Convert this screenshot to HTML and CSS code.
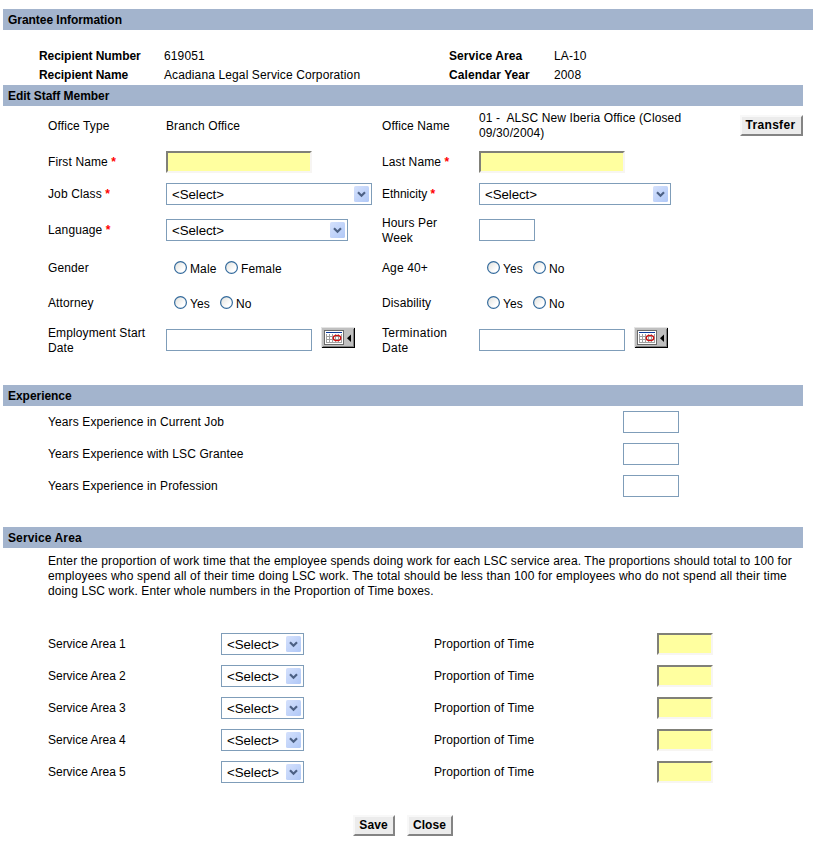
FILE: index.html
```html
<!DOCTYPE html>
<html lang="en">
<head>
<meta charset="utf-8">
<title>Edit Staff Member</title>
<link rel="stylesheet" href="styles.css">
</head>
<body>
<svg class="defs" aria-hidden="true">
  <defs>
    <linearGradient id="drop" x1="0" y1="0" x2="1" y2="1"><stop offset="0" stop-color="#d5e1fc"/><stop offset="1" stop-color="#b0c8f7"/></linearGradient>
    <linearGradient id="dot" x1="0" y1="0" x2="1" y2="1"><stop offset="0" stop-color="#dfdfda"/><stop offset=".7" stop-color="#ffffff"/></linearGradient>
    <symbol id="arrow" viewBox="0 0 15 16">
      <rect width="15" height="16" rx="1.5" fill="url(#drop)"/>
      <path d="M4 6.2l3.5 3.5L11 6.2" fill="none" stroke="#4d6185" stroke-width="2.2"/>
    </symbol>
    <symbol id="radio" viewBox="0 0 13 13">
      <circle cx="6.5" cy="6.5" r="5.9" fill="url(#dot)" stroke="#336a9c" stroke-width="1.2"/>
    </symbol>
    <symbol id="calendar" viewBox="0 0 34 21">
      <g shape-rendering="crispEdges">
        <rect width="34" height="21" fill="#c0c0c0"/>
        <path d="M0 0H34V1H1V21H0Z" fill="#e4e4e4"/>
        <path d="M33 1H34V21H1V20H33Z" fill="#000"/>
        <path d="M32 2H33V20H2V19H32Z" fill="#808080"/>
        <rect x="3.500" y="3.500" width="19" height="14" fill="#fff" stroke="#6a6a6a"/>
        <rect x="5" y="5" width="16" height="1" fill="#0a3a9a"/>
        <path d="M5 9.500H21M5 12.500H21M5 15.500H21M5.500 7V16M8.500 7V16M11.500 7V16M14.500 7V16M17.500 7V16M20.500 7V16" stroke="#a0a0a0"/>
      </g>
      <ellipse cx="16" cy="11" rx="3.700" ry="2.600" fill="none" stroke="#d01010" stroke-width="1.400"/>
      <path d="M30 7.500V15L26 11.250Z" fill="#000"/>
    </symbol>
  </defs>
</svg>
<main class="page">
  <h2 class="bar bar-wide">Grantee Information</h2>
  <dl class="grantee">
    <dt>Recipient Number</dt><dd>619051</dd><dt class="loose">Service Area</dt><dd>LA-10</dd>
    <dt>Recipient Name</dt><dd>Acadiana Legal Service Corporation</dd><dt class="loose">Calendar Year</dt><dd>2008</dd>
  </dl>

  <h2 class="bar">Edit Staff Member</h2>
  <section class="staff">
    <span class="low">Office Type</span><span class="low">Branch Office</span><span class="low">Office Name</span><span class="office low">01 -&nbsp; ALSC New Iberia Office (Closed 09/30/2004)</span><button class="btn transfer">Transfer</button>

    <label class="low">First Name <b class="req">*</b></label><input class="field name required"><label class="low">Last Name <b class="req">*</b></label><input class="field name required"><span></span>

    <label>Job Class <b class="req">*</b></label><div class="select job"><select><option>&lt;Select&gt;</option></select><svg class="arrow"><use href="#arrow"/></svg></div><label class="tight">Ethnicity <b class="req">*</b></label><div class="select ethnicity"><select><option>&lt;Select&gt;</option></select><svg class="arrow"><use href="#arrow"/></svg></div><span></span>

    <label>Language <b class="req">*</b></label><div class="select language"><select><option>&lt;Select&gt;</option></select><svg class="arrow"><use href="#arrow"/></svg></div><label class="low">Hours Per<br>Week</label><input class="field small"><span></span>

    <span>Gender</span><div class="radios"><svg><use href="#radio"/></svg><span class="male">Male</span><svg><use href="#radio"/></svg><span>Female</span></div><span>Age 40+</span><div class="radios"><svg><use href="#radio"/></svg><span class="yes">Yes</span><svg><use href="#radio"/></svg><span>No</span></div><span></span>

    <span>Attorney</span><div class="radios"><svg><use href="#radio"/></svg><span class="yes">Yes</span><svg><use href="#radio"/></svg><span>No</span></div><span>Disability</span><div class="radios"><svg><use href="#radio"/></svg><span class="yes">Yes</span><svg><use href="#radio"/></svg><span>No</span></div><span></span>

    <label class="low">Employment Start<br>Date</label><div class="date"><input class="field name"><svg><use href="#calendar"/></svg></div><label class="low termination">Termination<br>Date</label><div class="date"><input class="field name"><svg><use href="#calendar"/></svg></div><span></span>
  </section>

  <h2 class="bar">Experience</h2>
  <section class="experience">
    <label>Years Experience in Current Job</label><input class="field small">
    <label>Years Experience with LSC Grantee</label><input class="field small">
    <label>Years Experience in Profession</label><input class="field small">
  </section>

  <h2 class="bar bar-service">Service Area</h2>
  <p class="help">Enter the proportion of work time that the employee spends doing work for each LSC service area. The proportions should total to 100 for<br><span class="help-loose">employees who spend all of their time doing LSC work. The total should be less than 100 for employees who do not spend all their time</span><br>doing LSC work. Enter whole numbers in the Proportion of Time boxes.</p>
  <section class="areas">
    <label class="tight">Service Area 1</label><div class="select area"><select><option>&lt;Select&gt;</option></select><svg class="arrow"><use href="#arrow"/></svg></div><label>Proportion of Time</label><input class="field small required">
    <label class="tight">Service Area 2</label><div class="select area"><select><option>&lt;Select&gt;</option></select><svg class="arrow"><use href="#arrow"/></svg></div><label>Proportion of Time</label><input class="field small required">
    <label class="tight">Service Area 3</label><div class="select area"><select><option>&lt;Select&gt;</option></select><svg class="arrow"><use href="#arrow"/></svg></div><label>Proportion of Time</label><input class="field small required">
    <label class="tight">Service Area 4</label><div class="select area"><select><option>&lt;Select&gt;</option></select><svg class="arrow"><use href="#arrow"/></svg></div><label>Proportion of Time</label><input class="field small required">
    <label class="tight">Service Area 5</label><div class="select area"><select><option>&lt;Select&gt;</option></select><svg class="arrow"><use href="#arrow"/></svg></div><label>Proportion of Time</label><input class="field small required">
  </section>
  <div class="actions"><button class="btn save">Save</button><button class="btn close">Close</button></div>
</main>
</body>
</html>
```
FILE: styles.css
```css
* { box-sizing: border-box; }
body {
  margin: 0;
  background: #fff;
  color: #000;
  font: 12px/15px "Liberation Sans", Arial, sans-serif;
  letter-spacing: 0.12px;
  overflow: hidden;
}
.defs { position: absolute; width: 0; height: 0; }
.page { width: 813px; height: 841px; padding: 9px 0 0 3px; white-space: nowrap; }
.bar {
  width: 800px;
  height: 21px;
  margin: 0;
  padding: 1px 0 0 5px;
  background: #a3b4cd;
  font-size: 12px;
  line-height: 20px;
  letter-spacing: -0.04px;
}
.bar-wide { width: 810px; }
.bar-service { letter-spacing: 0.12px; }

.grantee {
  display: grid;
  grid-template-columns: 125px 285px 105px 1fr;
  grid-auto-rows: 19px;
  align-items: center;
  height: 55px;
  margin: 0;
  padding: 17px 0 0 36px;
}
.grantee dt { font-weight: bold; letter-spacing: -0.06px; }
.grantee .loose { letter-spacing: 0.08px; }
.grantee dd { margin: 0; }

.staff {
  display: grid;
  grid-template-columns: 118px 216px 97px 261px 1fr;
  grid-template-rows: 39px 33px 32px 40px 36px 34px 40px;
  align-items: center;
  height: 279px;
  padding-left: 45px;
}
.low { padding-top: 1px; }
.tight { letter-spacing: -0.02px; }
.termination { letter-spacing: 0.3px; }
.office { white-space: normal; width: 215px; }
.req { color: #f00; }

.field {
  width: 56px;
  height: 22px;
  padding: 0 3px;
  border: 1px solid #7f9db9;
  border-radius: 0;
  background: #fff;
  font: inherit;
}
.name { width: 146px; }
.required {
  background: #ffff9f;
  border: 2px solid;
  border-color: #808078 #f7f5f2 #f7f5f2 #808078;
}

.select { position: relative; height: 22px; }
.select select {
  display: block;
  width: 100%;
  height: 22px;
  padding: 1px 0 0 5px;
  border: 1px solid #7f9db9;
  border-radius: 0;
  background: #fff;
  color: #000;
  appearance: none;
  font: 13.33px/19px "Liberation Sans", Arial, sans-serif;
  letter-spacing: -0.1px;
}
.arrow { position: absolute; top: 3px; right: 3px; width: 15px; height: 16px; }
.job { width: 206px; }
.ethnicity { width: 192px; }
.language { width: 182px; }
.area { width: 83px; }

.radios { display: flex; padding-left: 8px; height: 15px; }
.radios svg { width: 13px; height: 13px; margin-right: 3px; flex: none; }
.radios span { padding-top: 1px; }
.radios .male { width: 35px; }
.radios .yes { width: 30px; }

.date { display: flex; gap: 9px; }
.date svg { width: 34px; height: 21px; margin-top: -2px; }

.btn {
  height: 21px;
  padding: 0;
  border: 2px solid;
  border-color: #f8f8f8 #848484 #848484 #f8f8f8;
  background: #ececec;
  color: #000;
  font: bold 12px/15px "Liberation Sans", Arial, sans-serif;
  letter-spacing: 0.1px;
}
.transfer { width: 63px; padding-right: 2px; letter-spacing: 0.3px; }
.save { width: 42px; padding-right: 1px; }
.close { width: 46px; padding-right: 1px; }

.experience {
  display: grid;
  grid-template-columns: 575px 1fr;
  grid-auto-rows: 32px;
  align-items: center;
  height: 121px;
  padding-left: 45px;
}
.help { height: 80px; margin: 0; padding: 6px 0 0 45px; }
.help-loose { letter-spacing: 0.166px; }
.areas {
  display: grid;
  grid-template-columns: 173px 213px 223px 1fr;
  grid-auto-rows: 32px;
  align-items: center;
  padding-left: 45px;
}
.actions { display: flex; gap: 12px; padding: 27px 0 0 350px; }
```
